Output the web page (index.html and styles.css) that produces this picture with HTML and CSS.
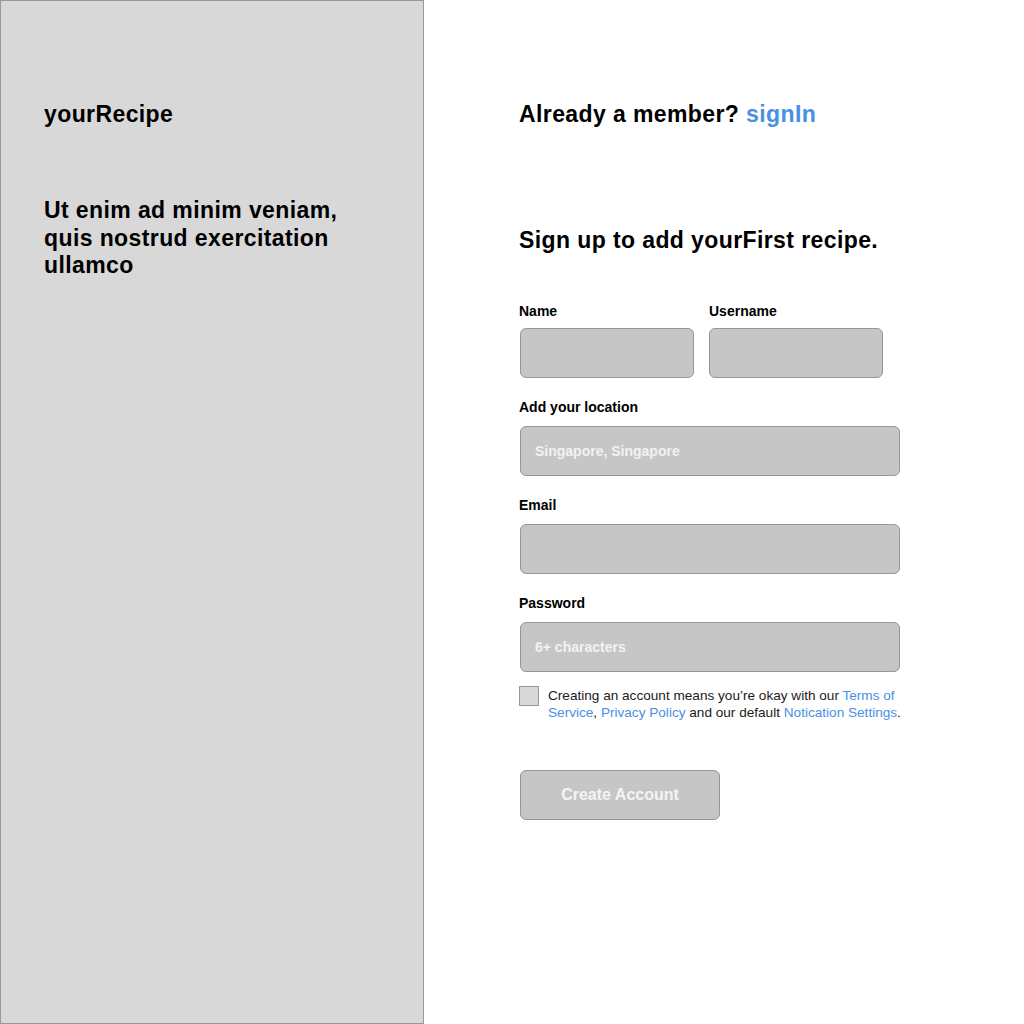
FILE: index.html
```html
<!DOCTYPE html>
<html lang="en">
<head>
<meta charset="utf-8">
<title>yourRecipe – Sign up</title>
<link rel="stylesheet" href="styles.css">
</head>
<body>
<div class="page">
  <aside class="side">
    <div class="brand">yourRecipe</div>
    <p class="tagline">Ut enim ad minim veniam,<br>quis nostrud exercitation<br>ullamco</p>
  </aside>
  <main class="main">
    <div class="member">Already a member? <a class="link" href="#">signIn</a></div>
    <h1 class="title">Sign up to add yourFirst recipe.</h1>
    <form class="form">
      <div class="row">
        <div class="field half">
          <label class="label">Name</label>
          <div class="input"></div>
        </div>
        <div class="field half">
          <label class="label">Username</label>
          <div class="input"></div>
        </div>
      </div>
      <div class="field">
        <label class="label">Add your location</label>
        <div class="input"><span class="ph">Singapore, Singapore</span></div>
      </div>
      <div class="field">
        <label class="label">Email</label>
        <div class="input"></div>
      </div>
      <div class="field">
        <label class="label">Password</label>
        <div class="input"><span class="ph">6+ characters</span></div>
      </div>
      <div class="terms">
        <span class="check"></span>
        <p class="terms-text">Creating an account means you’re okay with our <a class="tlink" href="#">Terms of</a><br><a class="tlink" href="#">Service</a>, <a class="tlink" href="#">Privacy Policy</a> and our default <a class="tlink" href="#">Notication Settings</a>.</p>
      </div>
      <div class="button">Create Account</div>
    </form>
  </main>
</div>
</body>
</html>
```

FILE: styles.css
```css
* { box-sizing: border-box; }
html, body { margin: 0; padding: 0; background: #ffffff; }
body {
  font-family: "Liberation Sans", Arial, Helvetica, sans-serif;
  color: #000;
}
.page {
  display: flex;
  width: 1024px;
  height: 1024px;
}
.side {
  width: 424px;
  height: 1024px;
  flex: none;
  background: #d8d8d8;
  border: 1px solid #979797;
  padding: 99px 0 0 43px;
}
.brand {
  font-size: 23px;
  font-weight: bold;
  line-height: 28px;
  letter-spacing: 0.4px;
}
.tagline {
  margin: 69px 0 0 0;
  font-size: 23px;
  font-weight: bold;
  line-height: 27.5px;
  letter-spacing: 0.4px;
}
.main {
  flex: 1;
  padding: 100px 0 0 95px;
}
.member {
  font-size: 23px;
  font-weight: bold;
  line-height: 28px;
  letter-spacing: 0.4px;
}
.link {
  color: #4a90e2;
  text-decoration: none;
}
.title {
  margin: 98px 0 0 0;
  font-size: 23px;
  font-weight: bold;
  line-height: 28px;
  letter-spacing: 0.4px;
}
.form {
  margin-top: 49px;
  width: 381px;
}
.row {
  display: flex;
  gap: 15px;
  margin-bottom: 21px;
}
.row .field {
  margin-bottom: 0;
}
.row .label {
  margin-bottom: 9px;
}
.field {
  margin-bottom: 21px;
}
.half {
  width: 174px;
  flex: none;
}
.row .half:first-child { width: 175px; }
.row .half + .half .input { margin-left: 0; }
.label {
  display: block;
  font-size: 14px;
  font-weight: bold;
  line-height: 16px;
  margin-bottom: 11px;
}
.input {
  margin-left: 1px;
  height: 50px;
  background: #c6c6c6;
  border: 1px solid #979797;
  border-radius: 6px;
  display: flex;
  align-items: center;
  padding: 0 0 1px 14px;
}
.ph {
  color: #f2f2f2;
  font-size: 14px;
  font-weight: bold;
}
.terms {
  display: flex;
  align-items: flex-start;
  gap: 9px;
  margin-top: -7px;
}
.check {
  width: 20px;
  height: 20px;
  flex: none;
  background: #d8d8d8;
  border: 1px solid #979797;
}
.terms-text {
  margin: 1px 0 0 0;
  font-size: 13.6px;
  line-height: 17px;
  color: #1a1a1a;
  white-space: nowrap;
}
.tlink {
  color: #4a90e2;
  text-decoration: none;
}
.button {
  margin: 49px 0 0 1px;
  width: 200px;
  height: 50px;
  background: #c6c6c6;
  border: 1px solid #979797;
  border-radius: 6px;
  display: flex;
  align-items: center;
  justify-content: center;
  color: #f4f4f4;
  font-size: 16px;
  font-weight: bold;
}
```
